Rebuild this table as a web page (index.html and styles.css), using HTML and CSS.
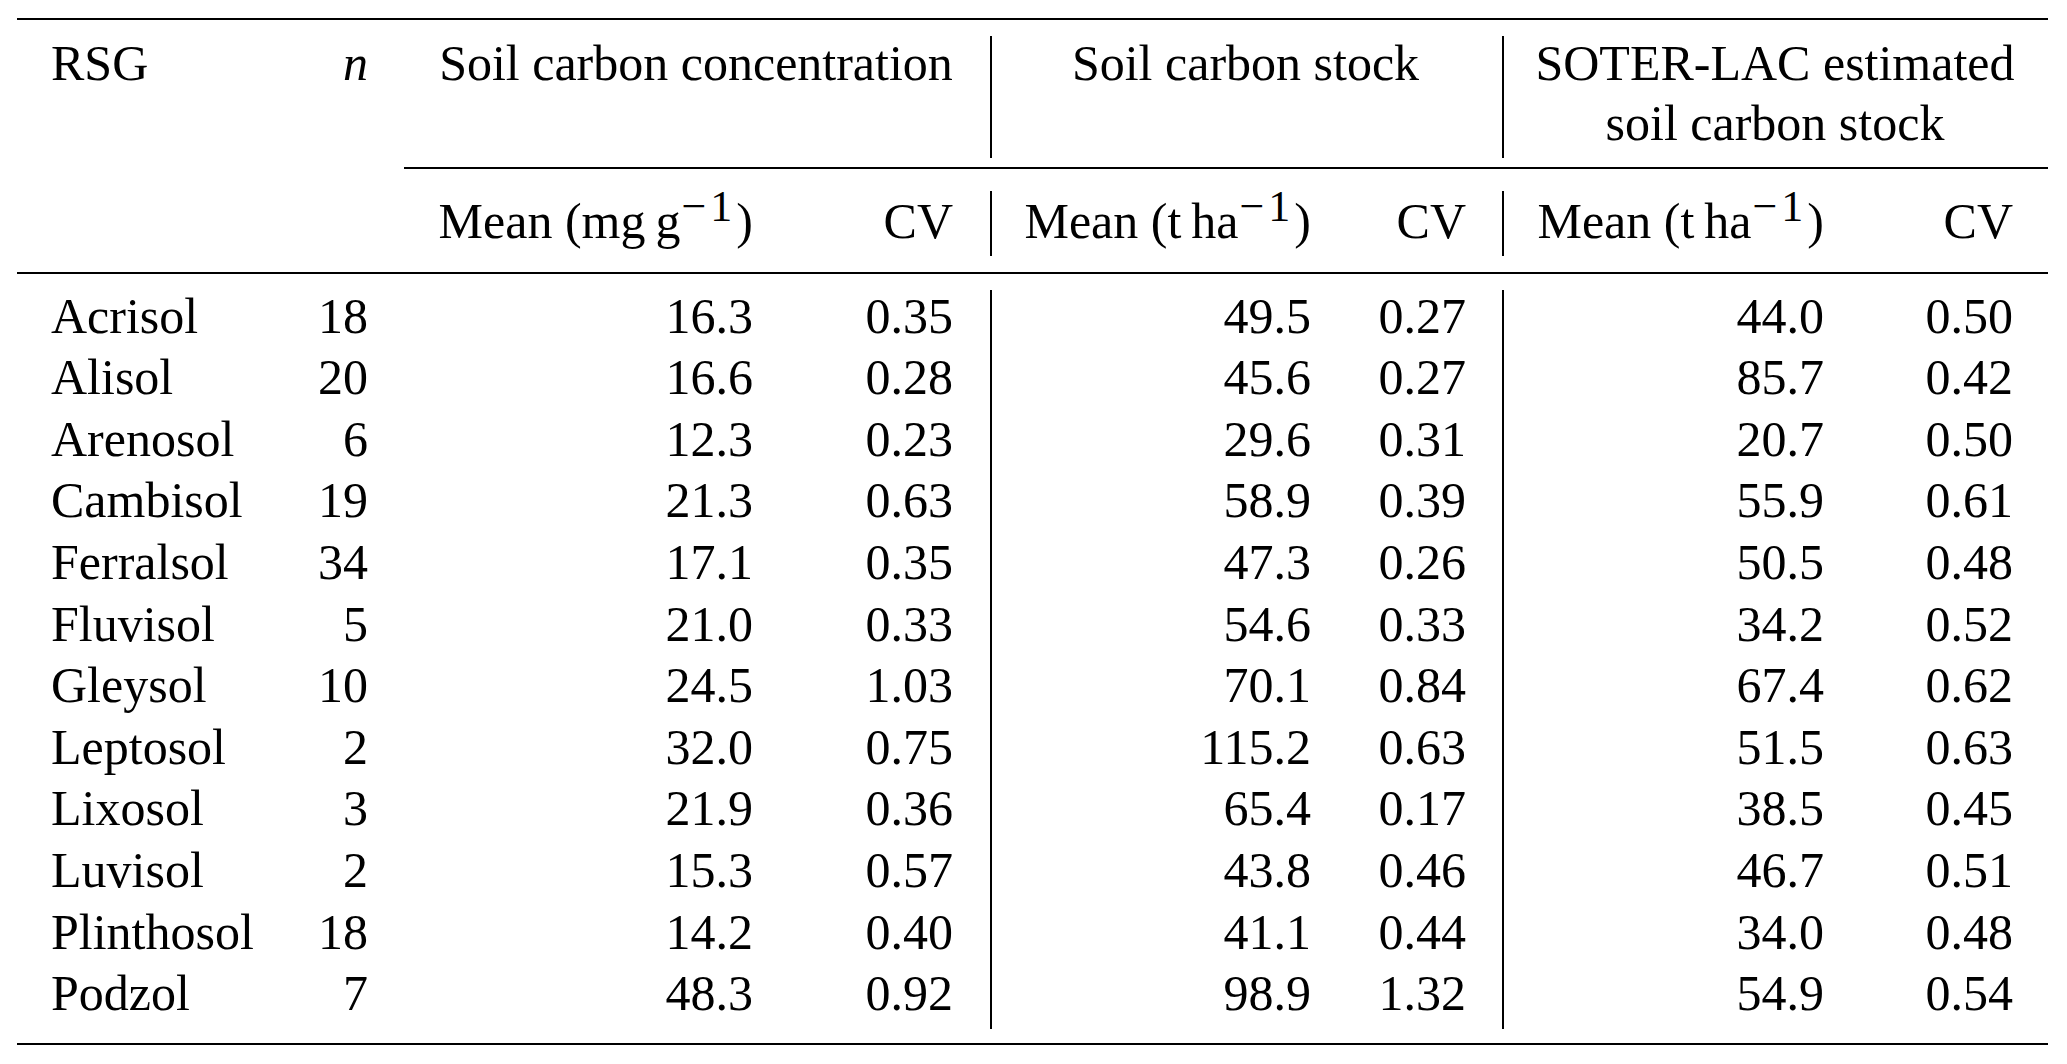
FILE: index.html
```html
<!DOCTYPE html>
<html lang="en">
<head>
<meta charset="utf-8">
<title>Soil carbon by RSG</title>
<link rel="stylesheet" href="styles.css">
</head>
<body>
<div class="tbl">
  <div class="grid head">
    <div class="h1 k1"><span class="t">RSG</span></div>
    <div class="h1 k2"><span class="t"><i>n</i></span></div>
    <div class="h1 s34"><span class="t">Soil carbon concentration</span></div>
    <div class="h1 s56 vl"><span class="t">Soil carbon stock</span></div>
    <div class="h1 s78 vl"><span class="t">SOTER-LAC estimated<br>soil carbon stock</span></div>
    <div class="cmid"></div>
    <div class="h2 k3 start3">Mean (mg&thinsp;g<span class="sup">−1</span>)</div>
    <div class="h2 k4">CV</div>
    <div class="h2 k5 vl">Mean (t&thinsp;ha<span class="sup">−1</span>)</div>
    <div class="h2 k6">CV</div>
    <div class="h2 k7 vl">Mean (t&thinsp;ha<span class="sup">−1</span>)</div>
    <div class="h2 k8">CV</div>
  </div>
  <div class="grid body">
    <div class="row"><div>Acrisol</div><div>18</div><div>16.3</div><div>0.35</div><div>49.5</div><div>0.27</div><div>44.0</div><div>0.50</div></div>
    <div class="row"><div>Alisol</div><div>20</div><div>16.6</div><div>0.28</div><div>45.6</div><div>0.27</div><div>85.7</div><div>0.42</div></div>
    <div class="row"><div>Arenosol</div><div>6</div><div>12.3</div><div>0.23</div><div>29.6</div><div>0.31</div><div>20.7</div><div>0.50</div></div>
    <div class="row"><div>Cambisol</div><div>19</div><div>21.3</div><div>0.63</div><div>58.9</div><div>0.39</div><div>55.9</div><div>0.61</div></div>
    <div class="row"><div>Ferralsol</div><div>34</div><div>17.1</div><div>0.35</div><div>47.3</div><div>0.26</div><div>50.5</div><div>0.48</div></div>
    <div class="row"><div>Fluvisol</div><div>5</div><div>21.0</div><div>0.33</div><div>54.6</div><div>0.33</div><div>34.2</div><div>0.52</div></div>
    <div class="row"><div>Gleysol</div><div>10</div><div>24.5</div><div>1.03</div><div>70.1</div><div>0.84</div><div>67.4</div><div>0.62</div></div>
    <div class="row"><div>Leptosol</div><div>2</div><div>32.0</div><div>0.75</div><div>115.2</div><div>0.63</div><div>51.5</div><div>0.63</div></div>
    <div class="row"><div>Lixosol</div><div>3</div><div>21.9</div><div>0.36</div><div>65.4</div><div>0.17</div><div>38.5</div><div>0.45</div></div>
    <div class="row"><div>Luvisol</div><div>2</div><div>15.3</div><div>0.57</div><div>43.8</div><div>0.46</div><div>46.7</div><div>0.51</div></div>
    <div class="row"><div>Plinthosol</div><div>18</div><div>14.2</div><div>0.40</div><div>41.1</div><div>0.44</div><div>34.0</div><div>0.48</div></div>
    <div class="row"><div>Podzol</div><div>7</div><div>48.3</div><div>0.92</div><div>98.9</div><div>1.32</div><div>54.9</div><div>0.54</div></div>
  </div>
</div>
</body>
</html>
```

FILE: styles.css
```css
html, body {
  margin: 0;
  background: #ffffff;
}

body {
  font-family: "Liberation Serif", "Times New Roman", serif;
  font-size: 50px;
  color: #000000;
}

.tbl {
  width: 2031px;
  margin: 18px 0 0 17px;
  border-top: 2px solid #000;
  border-bottom: 2px solid #000;
}

.grid {
  display: grid;
  grid-template-columns: 269px 118px 384px 202px 356px 156px 356px 190px;
}

.grid div {
  white-space: nowrap;
}

.head {
  margin-top: 16px;
  grid-template-rows: 122px auto 65px;
}

.h1 {
  line-height: 60px;
}

.h1 .t {
  display: block;
  margin-top: -3px;
}

.h2 {
  line-height: 60px;
}

.cmid {
  grid-column: 3 / -1;
  border-top: 2px solid #000;
  margin: 9px 0 22px;
}

.start3 {
  grid-column-start: 3;
}

.vl {
  border-left: 2px solid #000;
}

.s34 {
  grid-column: 3 / span 2;
  text-align: center;
  padding: 0 37px 0 35px;
}

.s56 {
  grid-column: 5 / span 2;
  text-align: center;
  padding: 0 36px 0 33px;
}

.s78 {
  grid-column: 7 / span 2;
  text-align: center;
  padding: 0 30px 0 28px;
}

.sup {
  font-size: 44px;
  line-height: 0;
  vertical-align: 17px;
  letter-spacing: 4px;
  margin-left: 1px;
}

.k1 { padding-left: 34px; }
.k2 { text-align: right; padding-right: 36px; }
.k3 { text-align: right; padding-right: 35px; }
.k4 { text-align: right; padding-right: 37px; }
.k5 { text-align: right; padding-right: 35px; }
.k6 { text-align: right; padding-right: 36px; }
.k7 { text-align: right; padding-right: 34px; }
.k8 { text-align: right; padding-right: 35px; }

.body {
  margin-top: 16px;
  border-top: 2px solid #000;
  padding: 15.6px 0 14px;
  grid-auto-rows: 61.6px;
}

.row {
  display: contents;
}

.row > div {
  line-height: 52px;
}

.row > :nth-child(1) { padding-left: 34px; }
.row > :nth-child(2) { text-align: right; padding-right: 36px; }
.row > :nth-child(3) { text-align: right; padding-right: 35px; }
.row > :nth-child(4) { text-align: right; padding-right: 37px; }
.row > :nth-child(5) { text-align: right; padding-right: 35px; border-left: 2px solid #000; }
.row > :nth-child(6) { text-align: right; padding-right: 36px; }
.row > :nth-child(7) { text-align: right; padding-right: 34px; border-left: 2px solid #000; }
.row > :nth-child(8) { text-align: right; padding-right: 35px; }
```
